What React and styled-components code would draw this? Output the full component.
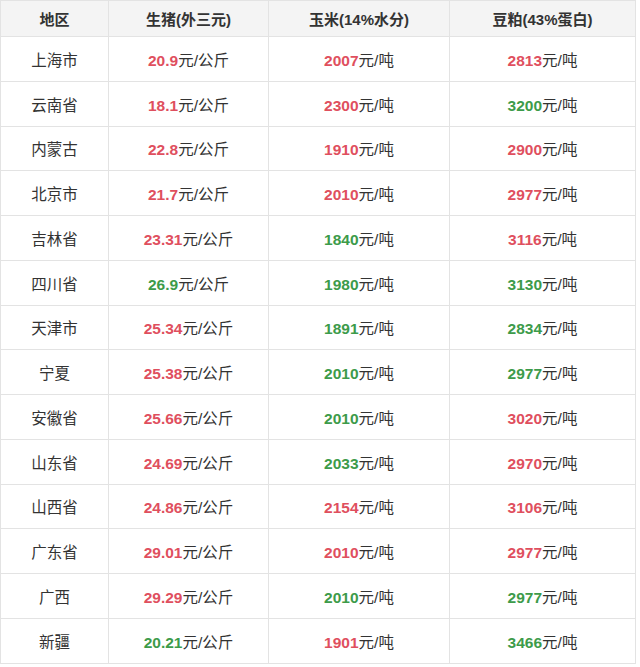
import styled, { createGlobalStyle } from "styled-components";

const GlobalStyle = createGlobalStyle`
    body {
        margin: 0;
        background: #fff;
        font-family: "Liberation Sans", Arial, "Noto Sans CJK SC", sans-serif;
        color: #333;
    }
`

const Table = styled.table`
    width: 635px;
    border-collapse: collapse;
    table-layout: fixed;
    font-size: 15.5px;
`

const HeadCell = styled.th`
    height: 35px;
    padding: 0;
    background: #f4f4f4;
    border: 1px solid #e3e3e3;
    font-size: 15px;
    font-weight: bold;
    color: #333;
    text-align: center;
`

const Row = styled.tr`
    height: 44.75px;
`

const Cell = styled.td`
    padding: 0;
    border: 1px solid #e3e3e3;
    text-align: center;
    color: #333;
`

const Num = styled.b`
    color: ${p => (p.up ? "#df4f5e" : "#3d9b4a")};
`

// r = red, g = green
const rows = [
    ["上海市", "20.9", "r", "2007", "r", "2813", "r"],
    ["云南省", "18.1", "r", "2300", "r", "3200", "g"],
    ["内蒙古", "22.8", "r", "1910", "r", "2900", "r"],
    ["北京市", "21.7", "r", "2010", "r", "2977", "r"],
    ["吉林省", "23.31", "r", "1840", "g", "3116", "r"],
    ["四川省", "26.9", "g", "1980", "g", "3130", "g"],
    ["天津市", "25.34", "r", "1891", "g", "2834", "g"],
    ["宁夏", "25.38", "r", "2010", "g", "2977", "g"],
    ["安徽省", "25.66", "r", "2010", "g", "3020", "r"],
    ["山东省", "24.69", "r", "2033", "g", "2970", "r"],
    ["山西省", "24.86", "r", "2154", "r", "3106", "r"],
    ["广东省", "29.01", "r", "2010", "r", "2977", "r"],
    ["广西", "29.29", "r", "2010", "g", "2977", "g"],
    ["新疆", "20.21", "g", "1901", "r", "3466", "g"],
]

const App = () => {
    return (
        <>
            <GlobalStyle />
            <Table>
                <colgroup>
                    <col style={{ width: 108 }} />
                    <col style={{ width: 160 }} />
                    <col style={{ width: 181 }} />
                    <col style={{ width: 186 }} />
                </colgroup>
                <thead>
                    <tr>
                        <HeadCell>地区</HeadCell>
                        <HeadCell>生猪(外三元)</HeadCell>
                        <HeadCell>玉米(14%水分)</HeadCell>
                        <HeadCell>豆粕(43%蛋白)</HeadCell>
                    </tr>
                </thead>
                <tbody>
                    {rows.map(r => (
                        <Row key={r[0]}>
                            <Cell>{r[0]}</Cell>
                            <Cell><Num up={r[2] === "r"}>{r[1]}</Num>元/公斤</Cell>
                            <Cell><Num up={r[4] === "r"}>{r[3]}</Num>元/吨</Cell>
                            <Cell><Num up={r[6] === "r"}>{r[5]}</Num>元/吨</Cell>
                        </Row>
                    ))}
                </tbody>
            </Table>
        </>
    )
}

export default App;
